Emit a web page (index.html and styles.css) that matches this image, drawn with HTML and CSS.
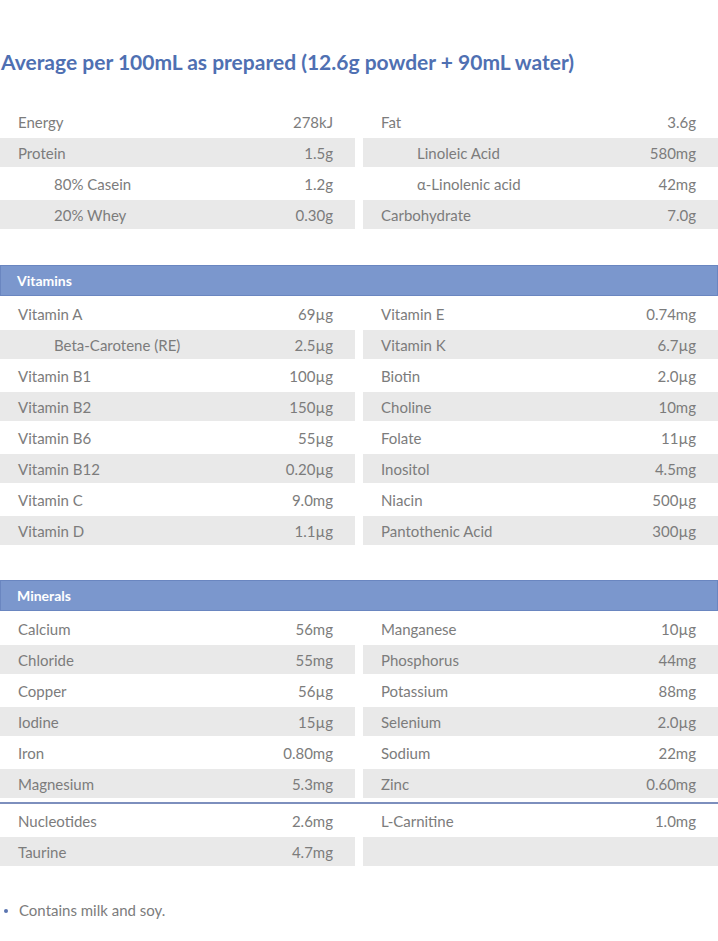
FILE: index.html
```html
<!DOCTYPE html>
<html>
<head>
<meta charset="utf-8">
<link rel="stylesheet" href="styles.css">
</head>
<body>
<h1 class="title">Average per 100mL as prepared (12.6g powder + 90mL water)</h1>

<section class="block first">
  <div class="grid">
    <div class="col">
      <div class="row"><span>Energy</span><span>278kJ</span></div>
      <div class="row alt"><span>Protein</span><span>1.5g</span></div>
      <div class="row sub"><span>80% Casein</span><span>1.2g</span></div>
      <div class="row alt sub"><span>20% Whey</span><span>0.30g</span></div>
    </div>
    <div class="col">
      <div class="row"><span>Fat</span><span>3.6g</span></div>
      <div class="row alt sub"><span>Linoleic Acid</span><span>580mg</span></div>
      <div class="row sub"><span>α-Linolenic acid</span><span>42mg</span></div>
      <div class="row alt"><span>Carbohydrate</span><span>7.0g</span></div>
    </div>
  </div>
</section>

<section class="block">
  <div class="bar">Vitamins</div>
  <div class="grid">
    <div class="col">
      <div class="row"><span>Vitamin A</span><span>69µg</span></div>
      <div class="row alt sub"><span>Beta-Carotene (RE)</span><span>2.5µg</span></div>
      <div class="row"><span>Vitamin B1</span><span>100µg</span></div>
      <div class="row alt"><span>Vitamin B2</span><span>150µg</span></div>
      <div class="row"><span>Vitamin B6</span><span>55µg</span></div>
      <div class="row alt"><span>Vitamin B12</span><span>0.20µg</span></div>
      <div class="row"><span>Vitamin C</span><span>9.0mg</span></div>
      <div class="row alt"><span>Vitamin D</span><span>1.1µg</span></div>
    </div>
    <div class="col">
      <div class="row"><span>Vitamin E</span><span>0.74mg</span></div>
      <div class="row alt"><span>Vitamin K</span><span>6.7µg</span></div>
      <div class="row"><span>Biotin</span><span>2.0µg</span></div>
      <div class="row alt"><span>Choline</span><span>10mg</span></div>
      <div class="row"><span>Folate</span><span>11µg</span></div>
      <div class="row alt"><span>Inositol</span><span>4.5mg</span></div>
      <div class="row"><span>Niacin</span><span>500µg</span></div>
      <div class="row alt"><span>Pantothenic Acid</span><span>300µg</span></div>
    </div>
  </div>
</section>

<section class="block minerals">
  <div class="bar">Minerals</div>
  <div class="grid">
    <div class="col">
      <div class="row"><span>Calcium</span><span>56mg</span></div>
      <div class="row alt"><span>Chloride</span><span>55mg</span></div>
      <div class="row"><span>Copper</span><span>56µg</span></div>
      <div class="row alt"><span>Iodine</span><span>15µg</span></div>
      <div class="row"><span>Iron</span><span>0.80mg</span></div>
      <div class="row alt"><span>Magnesium</span><span>5.3mg</span></div>
    </div>
    <div class="col">
      <div class="row"><span>Manganese</span><span>10µg</span></div>
      <div class="row alt"><span>Phosphorus</span><span>44mg</span></div>
      <div class="row"><span>Potassium</span><span>88mg</span></div>
      <div class="row alt"><span>Selenium</span><span>2.0µg</span></div>
      <div class="row"><span>Sodium</span><span>22mg</span></div>
      <div class="row alt"><span>Zinc</span><span>0.60mg</span></div>
    </div>
  </div>
  <div class="divider"></div>
  <div class="grid">
    <div class="col">
      <div class="row"><span>Nucleotides</span><span>2.6mg</span></div>
      <div class="row alt"><span>Taurine</span><span>4.7mg</span></div>
    </div>
    <div class="col">
      <div class="row"><span>L-Carnitine</span><span>1.0mg</span></div>
      <div class="row alt"><span></span><span></span></div>
    </div>
  </div>
</section>

<ul class="notes">
  <li>Contains milk and soy.</li>
</ul>
</body>
</html>
```

FILE: styles.css
```css
* { box-sizing: border-box; }

body {
  margin: 0;
  background: #ffffff;
  font-family: "Lato", "Open Sans", sans-serif;
  color: #7c7c7c;
}

.title {
  margin: 50px 0 0 1px;
  font-size: 21px;
  line-height: 24px;
  font-weight: 700;
  color: #4f70b2;
}

.block {
  margin-top: 35px;
}

.block.first {
  margin-top: 32px;
}

.block.minerals {
  margin-top: 34px;
}

.bar {
  height: 31px;
  line-height: 29px;
  padding-left: 16px;
  background: #7b97cd;
  border: 1px solid #6a86c0;
  color: #ffffff;
  font-weight: 700;
  font-size: 14px;
  margin-bottom: 2px;
}

.grid {
  display: grid;
  grid-template-columns: 1fr 1fr;
  column-gap: 8px;
}

.row {
  display: flex;
  justify-content: space-between;
  align-items: center;
  height: 31px;
  padding: 0 22px 0 18px;
  font-size: 15px;
  border-top: 1px solid #ffffff;
  border-bottom: 1px solid #ffffff;
}

.row.alt {
  background: #e9e9e9;
}

.row.sub {
  padding-left: 54px;
}

.divider {
  height: 2px;
  background: #7d8fbd;
  margin: 3px 0 1px;
}

.notes {
  list-style: none;
  margin: 34px 0 0;
  padding: 0 0 0 19px;
  font-size: 15px;
  color: #7c7c7c;
}

.notes li {
  position: relative;
}

.notes li::before {
  content: "";
  position: absolute;
  left: -15px;
  top: 8px;
  width: 4px;
  height: 4px;
  border-radius: 50%;
  background: #5a74b0;
}
```
